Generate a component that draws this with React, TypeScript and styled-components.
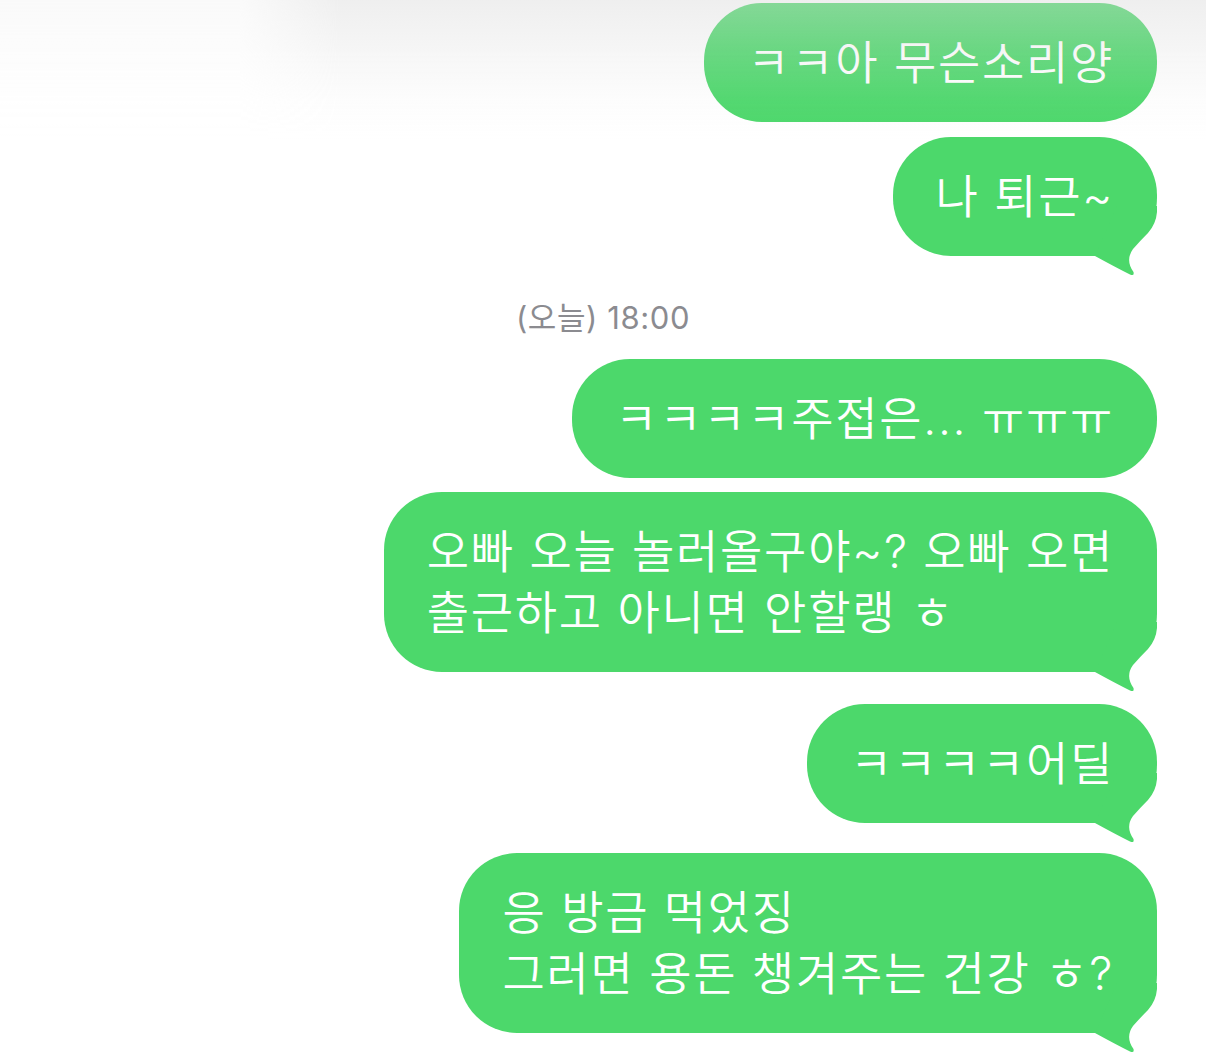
import React from "react";
import styled, { createGlobalStyle } from "styled-components";

const GREEN = "#4cd86b";
const FONT = `Inter, "Noto Sans CJK KR", "Noto Sans", sans-serif`;

const GlobalStyle = createGlobalStyle`
  html, body {
    margin: 0;
    padding: 0;
    background: #ffffff;
  }
  body {
    font-family: ${FONT};
    -webkit-font-smoothing: antialiased;
  }
`;

const Screen = styled.div`
  position: relative;
  width: 1206px;
  height: 1057px;
  overflow: hidden;
  background: #ffffff;
`;

const TopHaze = styled.div`
  position: absolute;
  top: 0;
  left: 0;
  right: 0;
  height: 140px;
  pointer-events: none;
  z-index: 2;
  background: linear-gradient(
    to bottom,
    rgba(215, 215, 215, 0.42) 0px,
    rgba(215, 215, 215, 0.22) 50px,
    rgba(215, 215, 215, 0.06) 100px,
    rgba(215, 215, 215, 0) 140px
  );
  -webkit-mask-image: linear-gradient(
    to right,
    rgba(0, 0, 0, 0.3) 0px,
    rgba(0, 0, 0, 0.3) 240px,
    #000 340px
  );
  mask-image: linear-gradient(
    to right,
    rgba(0, 0, 0, 0.3) 0px,
    rgba(0, 0, 0, 0.3) 240px,
    #000 340px
  );
`;

const Thread = styled.div`
  display: flex;
  flex-direction: column;
  align-items: flex-end;
  padding-top: 3px;
`;

const Bubble = styled.div<{ $tail?: boolean; $gap?: number }>`
  position: relative;
  box-sizing: border-box;
  margin-right: 49px;
  padding: 29px 43px;
  border-radius: 58px;
  background: ${GREEN};
  color: #ffffff;
  font-family: ${FONT};
  font-size: 46px;
  line-height: 61px;
  font-weight: 350;
  white-space: nowrap;
  letter-spacing: 1.7px;
  margin-bottom: ${(p) => (p.$gap ?? (p.$tail ? 31 : 15))}px;
`;

const Tail = styled.svg`
  position: absolute;
  right: 0;
  bottom: -22px;
  width: 70px;
  height: 72px;
  overflow: visible;
`;

const Stamp = styled.div`
  align-self: center;
  margin: 22px 0 21px 0;
  height: 40px;
  line-height: 40px;
  font-family: ${FONT};
  font-size: 31px;
  font-weight: 400;
  color: #8b8b90;
  letter-spacing: 0.6px;
`;

function BubbleTail() {
  return (
    <Tail viewBox="0 0 70 72" aria-hidden>
      <path
        d="M 8 50 Q 28 61 43 68.5 Q 47.5 70.5 46.5 66 Q 38 54 46 43 Q 53 35 61 27 Q 69 18 70 6 L 70 0 L 30 0 Z"
        fill={GREEN}
      />
    </Tail>
  );
}

type Msg = { lines: string[]; tail?: boolean; gap?: number };

const before: Msg[] = [
  { lines: ["ㅋㅋ아 무슨소리양"] },
  { lines: ["나 퇴근~"], tail: true, gap: 20 },
];

const after: Msg[] = [
  { lines: ["ㅋㅋㅋㅋ주접은... ㅠㅠㅠ"], gap: 14 },
  { lines: ["오빠 오늘 놀러올구야~? 오빠 오면", "출근하고 아니면 안할랭 ㅎ"], tail: true, gap: 32 },
  { lines: ["ㅋㅋㅋㅋ어딜"], tail: true, gap: 30 },
  { lines: ["응 방금 먹었징", "그러면 용돈 챙겨주는 건강 ㅎ?"], tail: true },
];

function Message({ m }: { m: Msg }) {
  return (
    <Bubble $tail={m.tail} $gap={m.gap}>
      {m.lines.map((l, i) => (
        <React.Fragment key={i}>
          {i > 0 && <br />}
          {l}
        </React.Fragment>
      ))}
      {m.tail && <BubbleTail />}
    </Bubble>
  );
}

export default function App() {
  return (
    <Screen>
      <GlobalStyle />
      <TopHaze />
      <Thread>
        {before.map((m, i) => (
          <Message key={`b${i}`} m={m} />
        ))}
        <Stamp>(오늘) 18:00</Stamp>
        {after.map((m, i) => (
          <Message key={`a${i}`} m={m} />
        ))}
      </Thread>
    </Screen>
  );
}
